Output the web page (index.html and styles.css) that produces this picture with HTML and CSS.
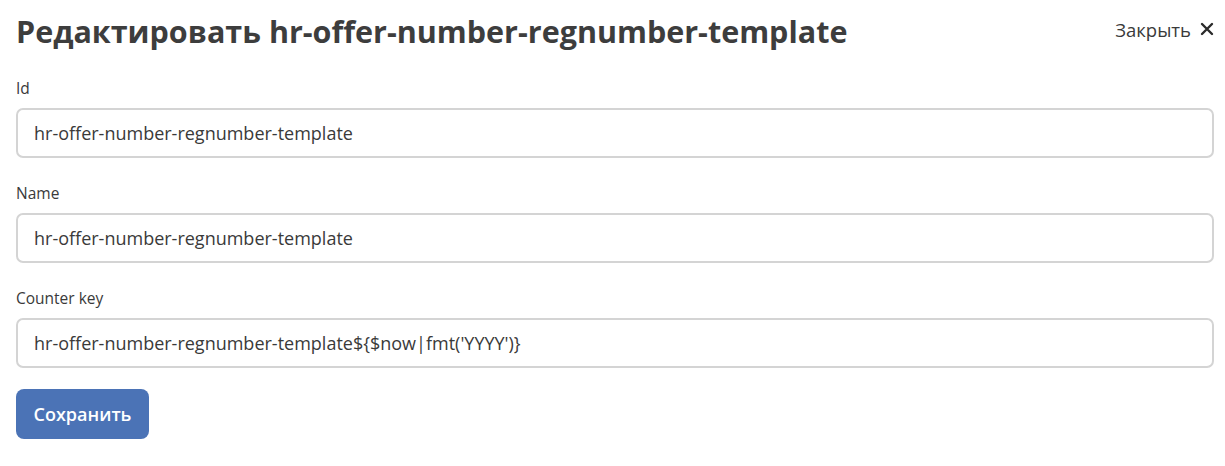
FILE: index.html
```html
<!DOCTYPE html>
<html lang="ru">
<head>
<meta charset="utf-8">
<link rel="stylesheet" href="styles.css">
</head>
<body>
<div class="page">
  <header class="head">
    <h1 class="title">Редактировать hr-offer-number-regnumber-template</h1>
    <button class="close" type="button">Закрыть
      <svg class="close-icon" width="14" height="14" viewBox="0 0 14 14"><path d="M2 2L12 12M12 2L2 12" stroke="#2b2b2b" stroke-width="2.4" stroke-linecap="round"/></svg>
    </button>
  </header>
  <form class="form">
    <div class="field">
      <label class="label">Id</label>
      <input class="input" type="text" value="hr-offer-number-regnumber-template">
    </div>
    <div class="field">
      <label class="label">Name</label>
      <input class="input" type="text" value="hr-offer-number-regnumber-template">
    </div>
    <div class="field">
      <label class="label">Counter key</label>
      <input class="input" type="text" value="hr-offer-number-regnumber-template${$now|fmt('YYYY')}">
    </div>
    <div class="actions">
      <button class="save" type="button">Сохранить</button>
    </div>
  </form>
</div>
</body>
</html>
```
FILE: styles.css
```css
* { box-sizing: border-box; }
html, body { margin: 0; padding: 0; background: #fff; }
body { font-family: "Open Sans", "Noto Sans", sans-serif; color: #3a3a3a; }
.page { padding: 9px 11px 0 16px; }
.head { display: flex; align-items: center; justify-content: space-between; height: 44px; }
.title { margin: 0; font-size: 30.5px; font-weight: 700; color: #3d3d3d; letter-spacing: 0; }
.close { display: flex; align-items: center; gap: 9px; background: none; border: 0; padding: 0; font-family: inherit; font-size: 18.5px; color: #3a3a3a; margin-top: -4px; }
.close-icon { display: block; }
.form { display: flex; flex-direction: column; margin-top: 25px; }
.field { display: flex; flex-direction: column; margin-bottom: 25px; }
.label { font-size: 15.5px; color: #3a3a3a; line-height: 20px; margin-bottom: 10px; }
.input { height: 50px; border: 2px solid #d4d4d4; border-radius: 7px; padding: 0 16px; font-family: inherit; font-size: 18px; color: #3a3a3a; outline: none; }
.actions { display: flex; margin-top: -4px; }
.save { height: 50px; width: 133px; padding: 0; background: #4b73b6; color: #fff; border: 0; border-radius: 8px; font-family: inherit; font-size: 18px; font-weight: 600; }
```
